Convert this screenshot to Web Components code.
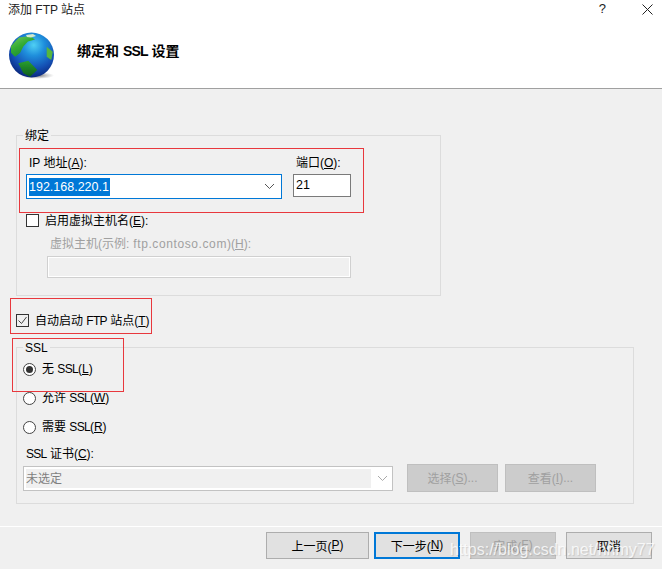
<!DOCTYPE html>
<html>
<head>
<meta charset="utf-8">
<style>
html, body { margin: 0; padding: 0; }
body {
    width: 662px;
    height: 569px;
    overflow: hidden;
    background: #f0f0f0;
    color: #000;
    font: 12px "Noto Sans CJK SC", "Liberation Sans", sans-serif;
    position: relative;
}
</style>
</head>
<body>
<ftp-wizard></ftp-wizard>

<script>
const ui = '"Liberation Sans", "Noto Sans CJK SC", sans-serif';

class FtpHeader extends HTMLElement {
    constructor() {
        super();
        this.attachShadow({ mode: 'open' });
    }

    connectedCallback() {
        this.shadowRoot.innerHTML = `
            <style>
                :host {
                    display: block;
                    height: 88px;
                    background: #fff;
                    border-bottom: 1px solid #a0a0a0;
                    font-family: ${ui};
                }
                .title {
                    display: flex;
                    justify-content: space-between;
                    height: 20px;
                    padding-left: 8px;
                    font-size: 12px;
                    line-height: 21px;
                    color: #222;
                }
                .ctrl {
                    display: flex;
                    align-items: center;
                    height: 18px;
                }
                .help { font-size: 13px; margin-right: 36px; line-height: 18px; }
                .close { margin-right: 9px; }
                .main {
                    display: flex;
                    align-items: center;
                    height: 62px;
                    padding-left: 8px;
                }
                .globe { margin-top: 10px; }
                h1 {
                    margin: 0 0 0 22px;
                    font-size: 14px;
                    font-weight: bold;
                    line-height: 20px;
                }
                h1 span { letter-spacing: -.8px; }
            </style>
            <div class="title">
                <span>添加 FTP 站点</span>
                <span class="ctrl">
                    <span class="help">?</span>
                    <svg class="close" width="11" height="11" viewBox="0 0 11 11"><path d="M.5.5l10 10M10.5.5l-10 10" stroke="#222" fill="none"/></svg>
                </span>
            </div>
            <div class="main">
                <svg class="globe" width="47" height="48" viewBox="0 0 47 48">
                    <defs>
                        <radialGradient id="sea" cx=".55" cy=".28" r=".74">
                            <stop offset="0" stop-color="#4fd0f4"/>
                            <stop offset=".32" stop-color="#1f8fdc"/>
                            <stop offset=".7" stop-color="#1450b4"/>
                            <stop offset="1" stop-color="#0a2478"/>
                        </radialGradient>
                        <radialGradient id="shade" cx=".5" cy=".5" r=".5">
                            <stop offset="0" stop-color="#444" stop-opacity=".8"/>
                            <stop offset="1" stop-color="#888" stop-opacity="0"/>
                        </radialGradient>
                        <linearGradient id="land" x1="0" y1="0" x2=".6" y2="1">
                            <stop offset="0" stop-color="#74c860"/>
                            <stop offset=".5" stop-color="#34ac34"/>
                            <stop offset="1" stop-color="#1a8a2a"/>
                        </linearGradient>
                        <linearGradient id="land2" x1="0" y1="0" x2="0" y2="1">
                            <stop offset="0" stop-color="#2ca02e"/>
                            <stop offset="1" stop-color="#0c5c1c"/>
                        </linearGradient>
                        <filter id="soft"><feGaussianBlur stdDeviation=".5"/></filter>
                    </defs>
                    <ellipse cx="29" cy="43.5" rx="17" ry="3.5" fill="url(#shade)"/>
                    <circle cx="23.5" cy="23" r="22.5" fill="url(#sea)"/>
                    <g filter="url(#soft)">
                        <path d="M3 14L11 5.5 22 4l5 3.5-7 2-4.7 5L12 21l-5 3.7-4-4z" fill="url(#land)"/>
                        <path d="M38.7 14.7l6 5-1.4 8.3-4.6-3.3z" fill="#56b63c"/>
                        <path d="M10.3 31.3l10-2.6 9 9.3-7.3 6.7-6.7-3.4z" fill="url(#land2)"/>
                        <path d="M18 3l7-1 3 2-5 1.5-4-.5z" fill="#d4e8cc"/>
                    </g>
                </svg>
                <h1>绑定和 <span>SSL</span> 设置</h1>
            </div>
        `;
    }
}

class FtpGroup extends HTMLElement {
    constructor() {
        super();
        this.attachShadow({ mode: 'open' });
    }

    connectedCallback() {
        this.shadowRoot.innerHTML = `
            <style>
                :host {
                    display: block;
                    box-sizing: border-box;
                    position: relative;
                    border: 1px solid #dcdcdc;
                }
                .legend {
                    position: absolute;
                    left: 6px;
                    top: -7px;
                    padding: 0 2px;
                    background: #f0f0f0;
                    line-height: 15px;
                    font-size: 12px;
                }
            </style>
            <span class="legend">${this.getAttribute('label')}</span>
            <slot></slot>
        `;
    }
}

class FtpCheck extends HTMLElement {
    constructor() {
        super();
        this.attachShadow({ mode: 'open' });
    }

    connectedCallback() {
        const on = this.hasAttribute('checked');
        this.shadowRoot.innerHTML = `
            <style>
                :host { display: flex; align-items: center; gap: 6px; height: 14px; font-size: 12px; }
                .box { width: 11px; height: 11px; border: 1px solid #333; background: #fff; display: block; flex: none; }
                :host([checked]) .box { background: transparent; }
                .text { padding-bottom: 2px; }
            </style>
            <svg class="box" viewBox="0 0 11 11">${on ? '<path d="M1.5 5.5l3 3 5-6.5" stroke="#444" fill="none"/>' : ''}</svg>
            <span class="text"><slot></slot></span>
        `;
    }
}

class FtpRadio extends HTMLElement {
    constructor() {
        super();
        this.attachShadow({ mode: 'open' });
    }

    connectedCallback() {
        const on = this.hasAttribute('checked');
        this.shadowRoot.innerHTML = `
            <style>
                :host { display: flex; align-items: center; gap: 6px; height: 14px; font-size: 12px; }
                svg { display: block; flex: none; }
                .text { padding-bottom: 3px; }
            </style>
            <svg width="13" height="13" viewBox="0 0 13 13">
                <circle cx="6.5" cy="6.5" r="6" fill="#fff" stroke="#444"/>
                ${on ? '<circle cx="6.5" cy="6.5" r="3.5" fill="#333"/>' : ''}
            </svg>
            <span class="text"><slot></slot></span>
        `;
    }
}

class FtpCombo extends HTMLElement {
    constructor() {
        super();
        this.attachShadow({ mode: 'open' });
    }

    connectedCallback() {
        const off = this.hasAttribute('disabled');
        this.shadowRoot.innerHTML = `
            <style>
                :host {
                    display: flex;
                    box-sizing: border-box;
                    align-items: center;
                    height: 25px;
                    border: 1px solid #0078d7;
                    background: #fff;
                    padding: 0 2px;
                    font-size: 12.5px;
                }
                :host([disabled]) {
                    border-color: #c2c2c2;
                    padding: 2px 0 2px 2px;
                    align-items: stretch;
                    font-size: 12px;
                    color: #7f7f7f;
                }
                .val { flex: 1; display: flex; align-items: center; }
                :host([disabled]) .val { background: #f0f0f0; padding-bottom: 2px; }
                svg { flex: none; align-self: center; margin: 0 4px 0 6px; }
            </style>
            <div class="val"><slot></slot></div>
            <svg width="11" height="7" viewBox="0 0 11 7"><path d="M1 1l4.5 4.5L10 1" fill="none" stroke="${off ? '#aaa' : '#555'}"/></svg>
        `;
    }
}

class FtpButton extends HTMLElement {
    constructor() {
        super();
        this.attachShadow({ mode: 'open' });
    }

    connectedCallback() {
        this.shadowRoot.innerHTML = `
            <style>
                :host {
                    display: flex;
                    box-sizing: border-box;
                    align-items: center;
                    justify-content: center;
                    height: 27px;
                    width: 86px;
                    padding-bottom: 1px;
                    background: #e1e1e1;
                    border: 1px solid #adadad;
                    font-size: 12px;
                }
                :host([primary]) { border: 2px solid #0078d7; }
                :host([disabled]) { background: #cccccc; border-color: #bfbfbf; color: #a0a0a0; }
            </style>
            <slot></slot>
        `;
    }
}

class FtpWizard extends HTMLElement {
    constructor() {
        super();
        this.attachShadow({ mode: 'open' });
    }

    connectedCallback() {
        this.shadowRoot.innerHTML = `
            <style>
                :host {
                    display: block;
                    position: relative;
                    width: 662px;
                    height: 569px;
                    font-family: ${ui};
                    font-size: 12px;
                    overflow: hidden;
                }
                u { text-underline-offset: 1px; }
                .n { letter-spacing: -.7px; }
                .body { padding: 46px 0 0 16px; }

                .bind { width: 425px; height: 161px; padding: 0 0 0 9px; box-sizing: border-box; }
                .bind-row { display: flex; gap: 11px; padding-top: 18px; }
                .field-label { line-height: 18px; height: 20px; display: block; padding-left: 3px; }
                .ip { width: 256px; }
                .port { width: 58px; }
                .sel { background: #0078d7; color: #fff; line-height: 18px; padding-right: 1px; }
                .port-input {
                    box-sizing: border-box;
                    height: 23px;
                    border: 1px solid #7a7a7a;
                    background: #fff;
                    font-size: 12.5px;
                    line-height: 21px;
                    padding-left: 2px;
                }
                .vhost { margin-top: 14px; }
                .vhost-sub { padding: 10px 0 0 21px; color: #a0a0a0; }
                .vhost-sub .field-label { height: 19px; line-height: 15px; }
                .wide { letter-spacing: .6px; }
                .disabled-input {
                    box-sizing: border-box;
                    width: 304px;
                    height: 22px;
                    border: 1px solid #d0d0d0;
                    background: #f0f0f0;
                    box-shadow: inset 0 0 0 1px #fff;
                }

                .auto { margin: 17px 0 0; }

                .ssl { width: 618px; height: 157px; margin-top: 20px; padding: 0 0 0 6px; box-sizing: border-box; }
                .radios { display: flex; flex-direction: column; gap: 15px; padding-top: 14px; }
                .cert-label { display: block; margin: 13px 0 0 3px; height: 17px; line-height: 15px; }
                .cert-row { display: flex; align-items: center; gap: 14px; }
                .cert-row ftp-combo { width: 370px; }
                .cert-btns { display: flex; gap: 7px; }
                .cert-btns ftp-button { width: 91px; height: 28px; }

                .footer {
                    position: relative;
                    margin-top: 22px;
                    border-top: 1px solid #fff;
                    display: flex;
                    justify-content: flex-end;
                    gap: 10px;
                    padding: 5px 10px 0 0;
                }
                .footer .prev { width: 103px; margin-right: -5px; }

                /* red annotation boxes from the original screenshot */
                .mark { position: absolute; box-sizing: border-box; border: 1px solid #e8383d; }
                .watermark {
                    position: absolute;
                    left: 450px;
                    top: 540px;
                    font: 16px/20px "Liberation Sans", sans-serif;
                    color: rgba(255, 255, 255, .8);
                    text-shadow: 1px 1px 1px rgba(0, 0, 0, .12);
                }
            </style>
            <ftp-header></ftp-header>
            <div class="body">
                <ftp-group class="bind" label="绑定">
                    <div class="bind-row">
                        <div class="ip">
                            <span class="field-label">IP 地址(<u>A</u>):</span>
                            <ftp-combo><span class="sel">192.168.220.1</span></ftp-combo>
                        </div>
                        <div class="port">
                            <span class="field-label">端口(<u>O</u>):</span>
                            <div class="port-input">21</div>
                        </div>
                    </div>
                    <div class="vhost">
                        <ftp-check>启用虚拟主机名(<u>E</u>):</ftp-check>
                        <div class="vhost-sub">
                            <span class="field-label">虚拟主机(示例:<span class="wide"> ftp.contoso.com</span>)(<u>H</u>):</span>
                            <div class="disabled-input"></div>
                        </div>
                    </div>
                </ftp-group>
                <ftp-check class="auto" checked>自动启动 <span class="n">FTP</span> 站点(<u>T</u>)</ftp-check>
                <ftp-group class="ssl" label="SSL">
                    <div class="radios">
                        <ftp-radio checked>无 <span class="n">SSL</span>(<u>L</u>)</ftp-radio>
                        <ftp-radio>允许 <span class="n">SSL</span>(<u>W</u>)</ftp-radio>
                        <ftp-radio>需要 <span class="n">SSL</span>(<u>R</u>)</ftp-radio>
                    </div>
                    <span class="cert-label"><span class="n">SSL</span> 证书(<u>C</u>):</span>
                    <div class="cert-row">
                        <ftp-combo disabled>未选定</ftp-combo>
                        <div class="cert-btns">
                            <ftp-button disabled>选择(<u>S</u>)...</ftp-button>
                            <ftp-button disabled>查看(<u>I</u>)...</ftp-button>
                        </div>
                    </div>
                </ftp-group>
            </div>
            <div class="footer">
                <ftp-button class="prev">上一页(<u>P</u>)</ftp-button>
                <ftp-button primary>下一步(<u>N</u>)</ftp-button>
                <ftp-button disabled>完成(<u>F</u>)</ftp-button>
                <ftp-button>取消</ftp-button>
            </div>
            <div class="mark" style="left:19px;top:148px;width:345px;height:65px"></div>
            <div class="mark" style="left:10px;top:298px;width:142px;height:36px"></div>
            <div class="mark" style="left:12px;top:338px;width:112px;height:54px"></div>
            <div class="watermark">https://blog.csdn.net/hnmy77</div>
        `;
    }
}

customElements.define('ftp-header', FtpHeader);
customElements.define('ftp-group', FtpGroup);
customElements.define('ftp-check', FtpCheck);
customElements.define('ftp-radio', FtpRadio);
customElements.define('ftp-combo', FtpCombo);
customElements.define('ftp-button', FtpButton);
customElements.define('ftp-wizard', FtpWizard);
</script>
</body>
</html>
